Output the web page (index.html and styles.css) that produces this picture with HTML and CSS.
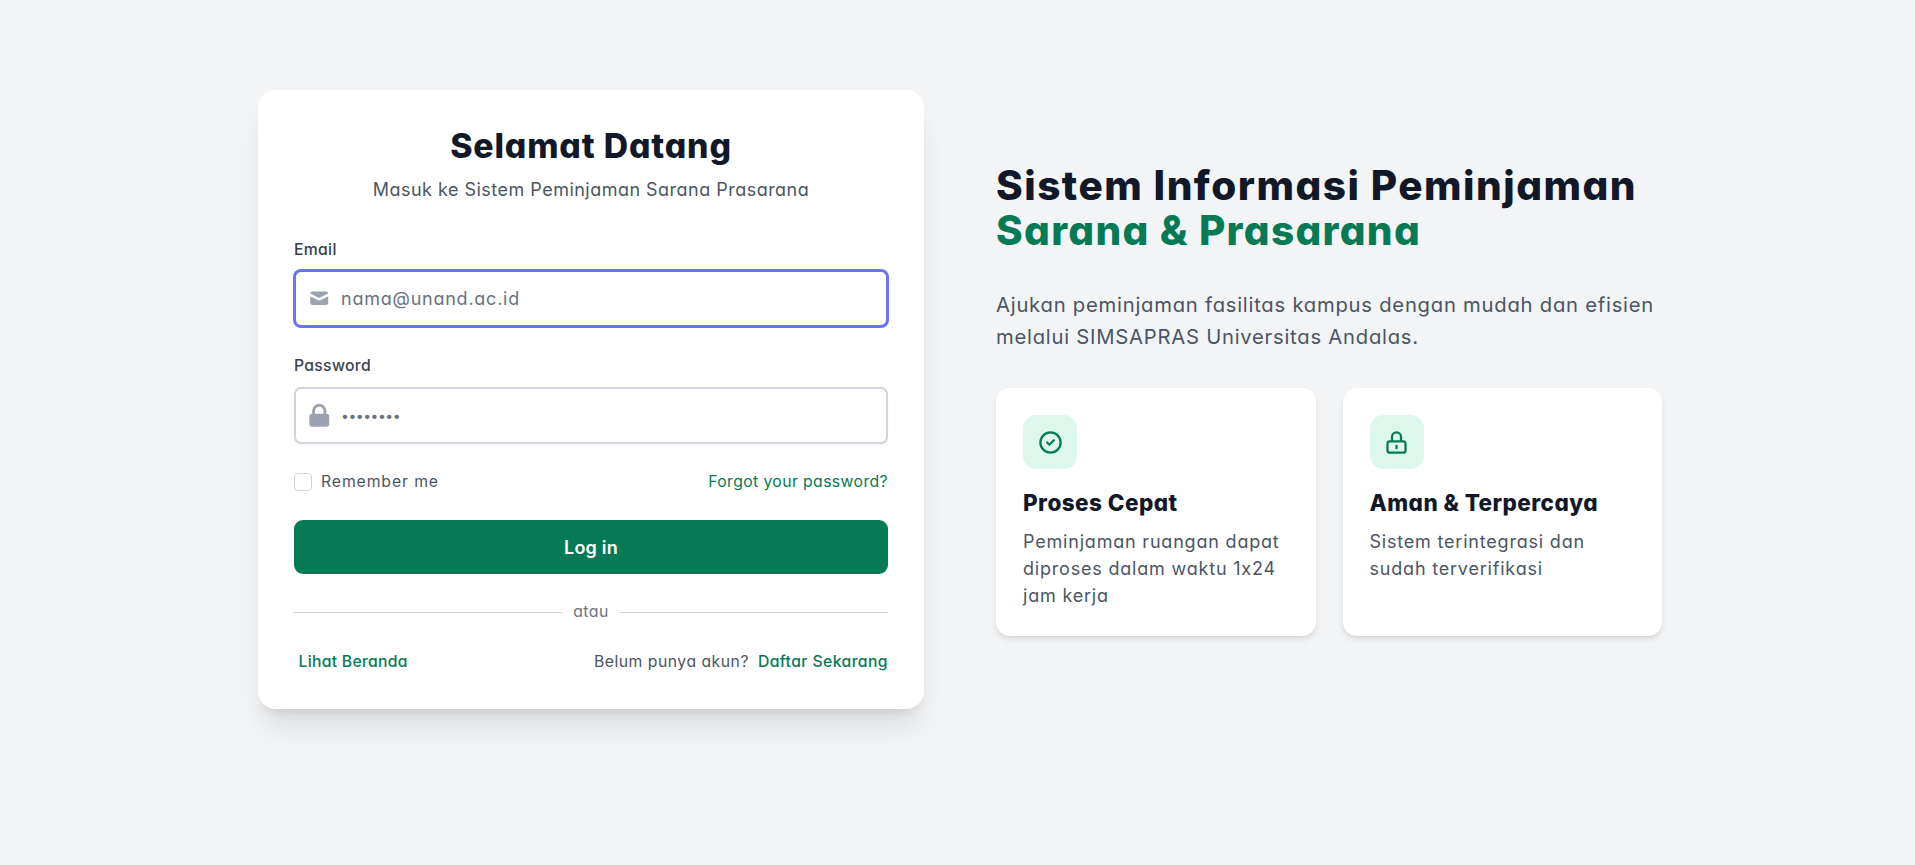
FILE: index.html
```html
<!DOCTYPE html>
<html lang="en">

<head>
    <meta charset="UTF-8">
    <meta name="viewport" content="width=device-width, initial-scale=1.0">
    <title>Login - SIMSAPRAS</title>
    <link rel="stylesheet" href="styles.css">
</head>

<body>
    <main class="page">
        <section class="login-card">
            <header class="login-head">
                <h1>Selamat Datang</h1>
                <p>Masuk ke Sistem Peminjaman Sarana Prasarana</p>
            </header>

            <form class="login-form">
                <div class="form-group form-group-email">
                    <label for="email">Email</label>
                    <div class="field field-focus">
                        <span class="field-icon">
                            <svg class="icon-mail" viewBox="0 0 20 20" fill="currentColor">
                                <path d="M2.003 5.884L10 9.882l7.997-3.998A2 2 0 0016 4H4a2 2 0 00-1.997 1.884z" />
                                <path d="M18 8.118l-8 4-8-4V14a2 2 0 002 2h12a2 2 0 002-2V8.118z" />
                            </svg>
                        </span>
                        <input id="email" type="email" placeholder="nama@unand.ac.id">
                    </div>
                </div>

                <div class="form-group">
                    <label for="password">Password</label>
                    <div class="field">
                        <span class="field-icon">
                            <svg class="icon-lock" viewBox="0 0 20 20" fill="currentColor">
                                <path fill-rule="evenodd" d="M5 9V7a5 5 0 0110 0v2a2 2 0 012 2v5a2 2 0 01-2 2H5a2 2 0 01-2-2v-5a2 2 0 012-2zm8-2v2H7V7a3 3 0 016 0z" />
                            </svg>
                        </span>
                        <input id="password" class="input-password" type="password" value="password">
                    </div>
                </div>

                <div class="form-row">
                    <label class="remember">
                        <input type="checkbox">
                        <span>Remember me</span>
                    </label>
                    <a href="#" class="link">Forgot your password?</a>
                </div>

                <button type="button" class="btn-login">Log in</button>

                <div class="divider"><span>atau</span></div>

                <div class="form-foot">
                    <a href="#" class="link-strong home-link">Lihat Beranda</a>
                    <p>Belum punya akun? <a href="#" class="link-strong">Daftar Sekarang</a></p>
                </div>
            </form>
        </section>

        <section class="info">
            <h2>Sistem Informasi Peminjaman <span>Sarana &amp; Prasarana</span></h2>
            <p class="lead">Ajukan peminjaman fasilitas kampus dengan mudah dan efisien melalui SIMSAPRAS Universitas Andalas.</p>

            <div class="features">
                <article class="feature">
                    <div class="feature-icon">
                        <svg viewBox="0 0 24 24" fill="none" stroke="currentColor" stroke-width="2" stroke-linecap="round" stroke-linejoin="round">
                            <path d="M9 12l2 2 4-4m6 2a9 9 0 11-18 0 9 9 0 0118 0z" />
                        </svg>
                    </div>
                    <h3>Proses Cepat</h3>
                    <p>Peminjaman ruangan dapat diproses dalam waktu 1x24 jam kerja</p>
                </article>
                <article class="feature">
                    <div class="feature-icon">
                        <svg viewBox="0 0 24 24" fill="none" stroke="currentColor" stroke-width="2" stroke-linecap="round" stroke-linejoin="round">
                            <path d="M12 15v2m-6 4h12a2 2 0 002-2v-6a2 2 0 00-2-2H6a2 2 0 00-2 2v6a2 2 0 002 2zm10-10V7a4 4 0 00-8 0v4h8z" />
                        </svg>
                    </div>
                    <h3>Aman &amp; Terpercaya</h3>
                    <p>Sistem terintegrasi dan sudah terverifikasi</p>
                </article>
            </div>
        </section>
    </main>
</body>

</html>
```

FILE: styles.css
```css
* {
    margin: 0;
    padding: 0;
    box-sizing: border-box;
}

body {
    font-family: "Inter", "Noto Sans", sans-serif;
    font-feature-settings: "cv11", "calt" 0;
    background: #f3f4f6;
    color: #111827;
    height: 865px;
    overflow: hidden;
}

.page {
    display: grid;
    grid-template-columns: 666px 666px;
    column-gap: 72px;
    align-items: center;
    padding: 90px 0 0 258px;
}

/* login card */
.login-card {
    background: #fff;
    border-radius: 18px;
    padding: 36px;
    box-shadow: 0 22px 28px -6px rgba(0, 0, 0, 0.1), 0 9px 11px -7px rgba(0, 0, 0, 0.1);
}

.login-head {
    text-align: center;
    margin-bottom: 36px;
}

.login-head h1 {
    font-size: 33.75px;
    line-height: 40.5px;
    font-weight: 800;
    letter-spacing: 0.85px;
    margin-bottom: 9px;
}

.login-head p {
    font-size: 18px;
    line-height: 27px;
    letter-spacing: 0.48px;
    color: #4b5563;
}

.form-group {
    margin-bottom: 27px;
}

.form-group-email {
    margin-bottom: 28px;
}

.form-group label {
    display: block;
    font-size: 15.75px;
    line-height: 22.5px;
    font-weight: 500;
    letter-spacing: 0.3px;
    color: #374151;
    margin-bottom: 9px;
}

.field {
    display: flex;
    align-items: center;
    height: 57px;
    border: 2px solid #d1d5db;
    border-radius: 7px;
    padding-left: 12px;
    background: #fff;
    box-shadow: 0 1px 2px rgba(0, 0, 0, 0.05);
}

.field-focus {
    border-color: #6875f5;
    box-shadow: 0 0 0 1px #6875f5;
}

.field-icon {
    display: flex;
    justify-content: center;
    align-items: center;
    flex: 0 0 22px;
    min-width: 0;
    color: #9ca3af;
}

.icon-mail {
    width: 22.5px;
    height: 22.5px;
    flex: none;
}

.icon-lock {
    width: 28.5px;
    height: 28.5px;
    flex: none;
}

.field input {
    flex: 1;
    min-width: 0;
    border: 0;
    outline: 0;
    background: transparent;
    margin-left: 11px;
    font-family: inherit;
    font-feature-settings: inherit;
    font-size: 18px;
    letter-spacing: 0.76px;
    color: #6b7280;
}

.field input::placeholder {
    color: #6b7280;
    opacity: 1;
}

.field .input-password {
    font-size: 14px;
    letter-spacing: -0.5px;
}

.form-row {
    display: flex;
    justify-content: space-between;
    align-items: center;
    font-size: 15.75px;
    line-height: 22.5px;
    margin-bottom: 27px;
}

.remember {
    display: flex;
    align-items: center;
    gap: 9px;
    letter-spacing: 0.9px;
    color: #4b5563;
}

.remember input {
    appearance: none;
    width: 18px;
    height: 18px;
    border: 1px solid #d1d5db;
    border-radius: 4px;
    background: #fff;
}

.link {
    color: #057a55;
    letter-spacing: 0.4px;
    text-decoration: none;
}

.link-strong {
    color: #057a55;
    font-weight: 500;
    letter-spacing: 0.4px;
    text-decoration: none;
    margin-left: 4px;
}

.btn-login {
    display: block;
    width: 100%;
    height: 54px;
    border: 0;
    border-radius: 9px;
    background: #057a55;
    color: #fff;
    font-family: inherit;
    font-feature-settings: inherit;
    font-size: 18px;
    font-weight: 600;
    letter-spacing: 0.2px;
    margin-bottom: 27px;
}

.divider {
    display: flex;
    align-items: center;
    gap: 11px;
    font-size: 15.75px;
    line-height: 22.5px;
    letter-spacing: 0.5px;
    color: #6b7280;
    margin-bottom: 27px;
}

.divider::before,
.divider::after {
    content: "";
    flex: 1;
    height: 1px;
    background: #d1d5db;
}

.form-foot {
    display: flex;
    justify-content: space-between;
    align-items: center;
    font-size: 15.75px;
    line-height: 22.5px;
    letter-spacing: 0.5px;
    color: #4b5563;
}

.home-link {
    margin-left: 4.5px;
    letter-spacing: 0.28px;
}

/* right side */
.info h2 {
    font-size: 40.5px;
    line-height: 45px;
    font-weight: 800;
    letter-spacing: 1.48px;
    margin-bottom: 36px;
}

.info h2 span {
    display: block;
    letter-spacing: 1.3px;
    color: #057a55;
}

.lead {
    font-size: 20.25px;
    line-height: 31.5px;
    letter-spacing: 0.75px;
    color: #4b5563;
    margin-bottom: 36px;
}

.features {
    display: grid;
    grid-template-columns: 1fr 1fr;
    gap: 27px;
}

.feature {
    background: #fff;
    border-radius: 14px;
    padding: 27px;
    box-shadow: 0 4px 7px -1px rgba(0, 0, 0, 0.1), 0 2px 4px -2px rgba(0, 0, 0, 0.1);
}

.feature-icon {
    display: flex;
    justify-content: center;
    align-items: center;
    width: 54px;
    height: 54px;
    border-radius: 13.5px;
    background: #def7ec;
    color: #057a55;
    margin-bottom: 18px;
}

.feature-icon svg {
    width: 27px;
    height: 27px;
}

.feature h3 {
    font-size: 22.5px;
    line-height: 31.5px;
    font-weight: 800;
    letter-spacing: 0.45px;
    margin-bottom: 9px;
}

.feature p {
    font-size: 18px;
    line-height: 27px;
    letter-spacing: 0.8px;
    color: #4b5563;
}
```
